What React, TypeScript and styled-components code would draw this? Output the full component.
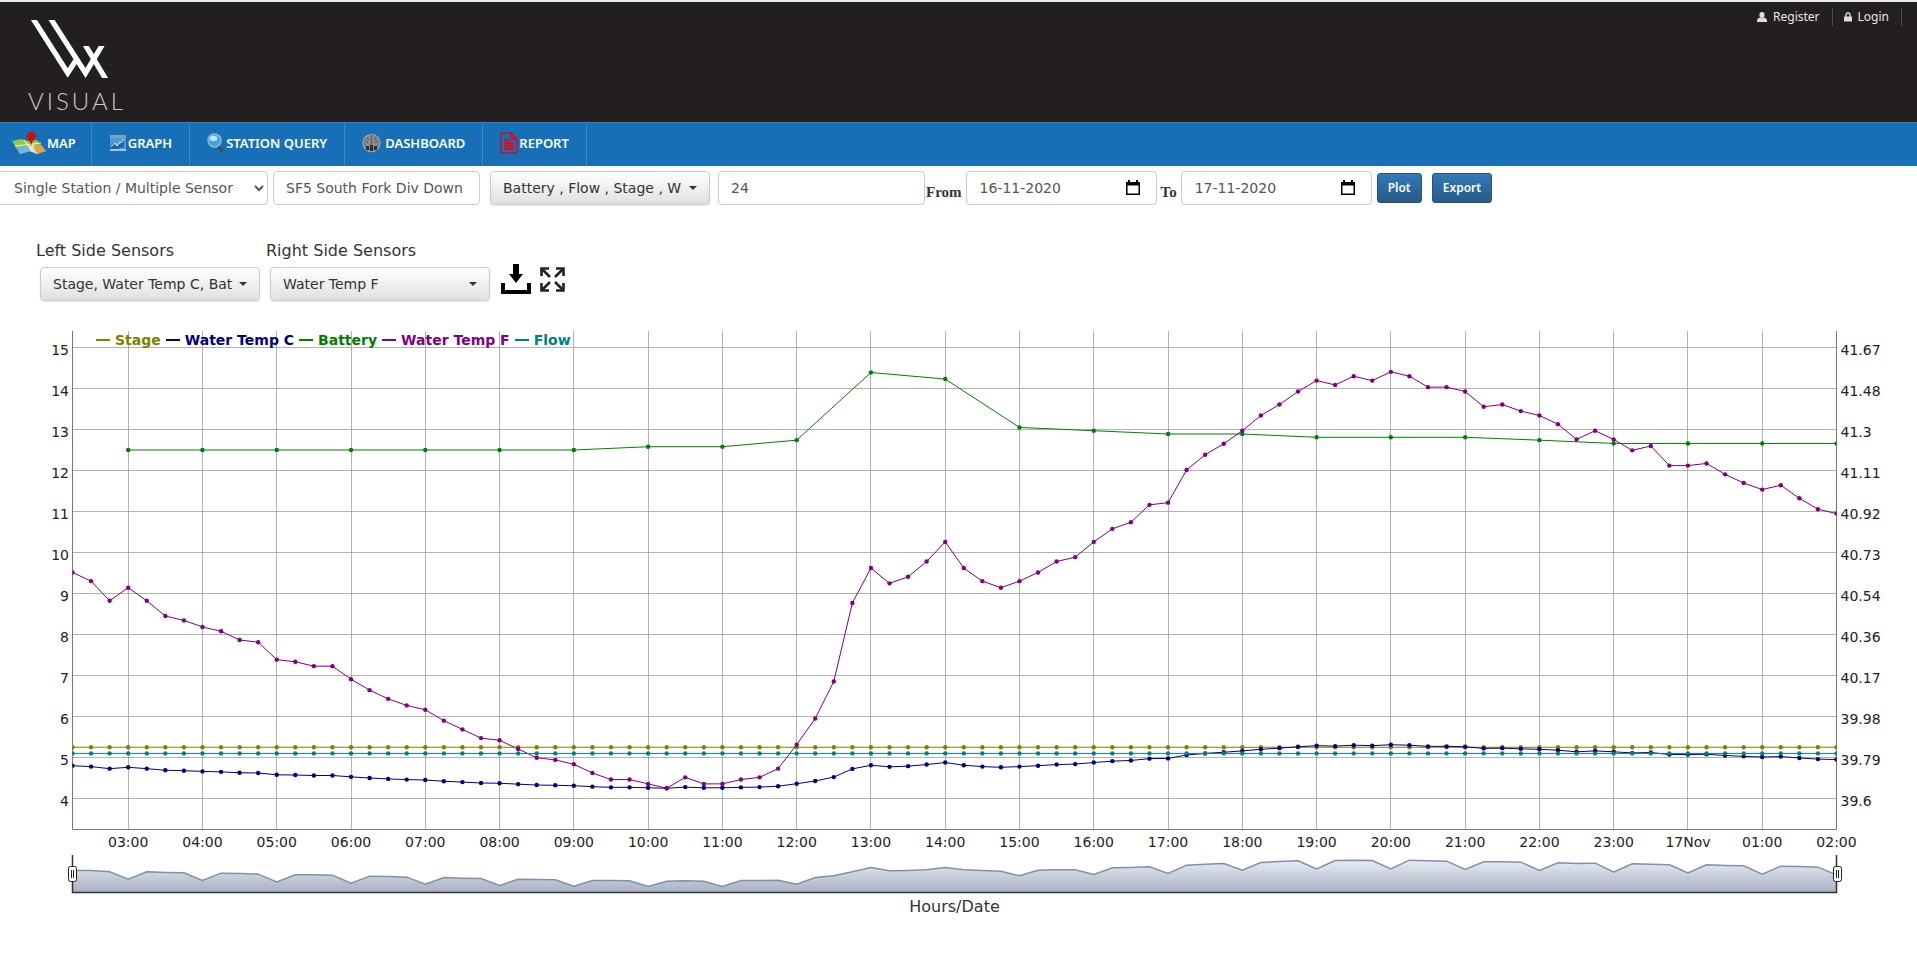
import React, { useLayoutEffect, useRef, useState } from "react";
import styled, { createGlobalStyle, css } from "styled-components";

const SANS = `"DejaVu Sans", Verdana, sans-serif`;
const UI = `"Noto Sans", "Open Sans", sans-serif`;

const GlobalStyle = createGlobalStyle`
  * { box-sizing: border-box; }
  body { margin: 0; background: #fff; color: #333; font-family: ${SANS}; font-size: 14px; }
`;

/* ---------- header ---------- */

const Header = styled.header`
  display: flex;
  justify-content: space-between;
  align-items: flex-start;
  height: 122px;
  padding: 6px 15px 0 28px;
  background: #231f20;
  border-top: 2px solid #e8eaec;
`;

const Brand = styled.a`
  display: flex;
  flex-direction: column;
  align-items: flex-start;
  gap: 9px;
  padding-top: 8px;
  color: #c9c7c7;
  text-decoration: none;
  font: 300 24px/28px Lato, sans-serif;
  letter-spacing: 3px;
  svg { display: block; }
`;

const Account = styled.ul`
  display: flex;
  list-style: none;
  margin: 0;
  padding: 0;
`;

const AccountItem = styled.li`
  border-right: 1px solid #4b4849;
  height: 18px;
  padding: 0 12px 0 11px;
  a {
    display: flex;
    align-items: center;
    gap: 6px;
    height: 18px;
    color: #e6e6e6;
    font: 12px/18px ${UI};
    text-decoration: none;
  }
`;

/* ---------- navigation ---------- */

const Nav = styled.nav`
  display: flex;
  height: 44px;
  background: #176fb7;
  border-top: 1px solid #3a80b8;
`;

const NavLink = styled.a`
  display: flex;
  align-items: center;
  gap: 1px;
  padding: 0 17px 3px 17px;
  border-right: 1px solid #3c88c5;
  color: #fff;
  font: 600 13px/20px ${UI};
  text-decoration: none;
  white-space: nowrap;
  &:first-child { padding: 0 15px 3px 12px; }
`;

/* ---------- filter toolbar ---------- */

const Toolbar = styled.form`
  display: flex;
  align-items: center;
  padding-top: 5px;
  height: 39px;
`;

const field = css`
  height: 34px;
  border: 1px solid #ccc;
  border-radius: 4px;
  background: #fff;
  color: #555;
  font: 14px/20px ${SANS};
`;

const ModeSelect = styled.select`
  ${field}
  width: 271px;
  margin: 0 5px 0 -3px;
  padding: 0 0 0 12px;
`;

const TextField = styled.input<{ $end?: number }>`
  ${field}
  width: 207px;
  margin-right: ${(p) => p.$end ?? 0}px;
  padding: 0 12px;
`;

const DateBox = styled.span`
  ${field}
  display: flex;
  align-items: center;
  width: 191px;
  padding: 0 16px 0 13px;
  svg { flex: none; }
`;

const DateInput = styled.input`
  flex: 1;
  min-width: 0;
  padding: 0;
  border: 0;
  outline: 0;
  background: none;
  color: inherit;
  font: inherit;
`;

const DateLabel = styled.label<{ $gap?: number }>`
  margin: 8px 4px 0 ${(p) => p.$gap ?? 1}px;
  font: bold 15px/20px "Liberation Serif", "Times New Roman", serif;
`;

const DropButton = styled.button<{ $end?: number }>`
  display: flex;
  align-items: center;
  justify-content: space-between;
  gap: 4px;
  width: 220px;
  height: 34px;
  margin-right: ${(p) => p.$end ?? 0}px;
  padding: 0 12px;
  border: 1px solid #ccc;
  border-radius: 4px;
  background: linear-gradient(#fff, #e0e0e0);
  box-shadow: 0 1px 2px rgba(0, 0, 0, 0.1);
  color: #333;
  font: 14px/20px ${SANS};
  white-space: nowrap;
  &::after {
    content: "";
    border: 4px solid transparent;
    border-top-color: #333;
    border-bottom: 0;
  }
`;

const ActionButton = styled.button`
  height: 30px;
  margin-left: 5px;
  padding: 0 10px;
  border: 1px solid #245580;
  border-radius: 3px;
  background: linear-gradient(#337ab7, #265a88);
  color: #fff;
  font: 600 12px/18px ${UI};
  & + & { margin-left: 10px; }
`;

/* ---------- sensor pickers ---------- */

const Sensors = styled.section`
  display: flex;
  align-items: flex-end;
  padding: 36px 0 0 40px;
`;

const Picker = styled.div`
  display: flex;
  flex-direction: column;
  gap: 6px;
  margin-right: 10px;
`;

const PickerLabel = styled.label`
  margin-left: -4px;
  font-size: 16px;
  line-height: 20px;
`;

const IconButton = styled.button`
  display: flex;
  align-items: center;
  height: 30px;
  margin: 0 8px 7px 1px;
  padding: 0;
  border: 0;
  background: none;
`;

/* ---------- chart ---------- */

const Chart = styled.figure`
  position: relative;
  margin: 30px 0 0;
`;

const Plot = styled.svg`
  display: block;
  width: 100%;
  height: 564px;
  text { font: 14px ${SANS}; fill: #222; }
`;

const Legend = styled.ul`
  position: absolute;
  top: 0;
  left: 96px;
  display: flex;
  gap: 5px;
  margin: 0;
  padding: 0;
  list-style: none;
`;

const LegendItem = styled.li<{ $color: string }>`
  display: flex;
  align-items: center;
  gap: 5px;
  color: ${(p) => p.$color};
  font: bold 14px/18px ${SANS};
  &::before {
    content: "";
    width: 14px;
    height: 2px;
    background: currentColor;
  }
`;

const Caption = styled.figcaption`
  padding: 2px 48px 0 40px;
  font-size: 16px;
  line-height: 20px;
  text-align: center;
`;

/* Water temperature every 15 minutes, in hundredths of a degree F above 39.65 */
const TEMP = [
  99, 95, 86, 92, 86, 79, 77, 74, 72, 68, 67, 59, 58, 56, 56, 50, 45, 41, 38, 36, 31, 27, 23, 22,
  18, 14, 13, 11, 7, 4, 4, 2, 0, 5, 2, 2, 4, 5, 9, 20, 32, 49, 85, 101, 94, 97, 104, 113,
  101, 95, 92, 95, 99, 104, 106, 113, 119, 122, 130, 131, 146, 153, 158, 164, 171, 176, 182, 187,
  185, 189, 187, 191, 189, 184, 184, 182, 175, 176, 173, 171, 167, 160, 164, 160, 155, 157, 148, 148,
  149, 144, 140, 137, 139, 133, 128, 126,
];
const BATTERY = [
  12.5, 12.5, 12.5, 12.5, 12.5, 12.5, 12.5, 12.58, 12.58, 12.74, 14.39, 14.23, 13.05, 12.97, 12.89,
  12.89, 12.81, 12.81, 12.81, 12.74, 12.66, 12.66, 12.66, 12.66,
];
/* Heights of the overview area, in thirds of a pixel */
const OVERVIEW = [
  66, 66, 62, 40, 62, 60, 59, 36, 58, 57, 55, 32, 53, 53, 52, 28, 49, 48, 46, 25, 45, 43, 42, 21,
  40, 39, 38, 19, 36, 36, 35, 18, 34, 35, 34, 18, 36, 36, 37, 25, 45, 50, 62, 75, 65, 66, 68, 75,
  68, 66, 64, 50, 67, 68, 68, 54, 74, 75, 77, 57, 82, 85, 87, 67, 90, 93, 95, 71, 96, 97, 96, 71,
  97, 95, 94, 69, 92, 92, 91, 66, 89, 87, 88, 62, 86, 85, 83, 59, 83, 81, 80, 55, 79, 78, 76, 53,
];
const RIGHT = ["39.6", "39.79", "39.98", "40.17", "40.36", "40.54", "40.73", "40.92", "41.11", "41.3", "41.48", "41.67"];

const SERIES = [
  { name: "Stage", color: "#808000" },
  { name: "Water Temp C", color: "#000080" },
  { name: "Battery", color: "#008000" },
  { name: "Water Temp F", color: "#800080" },
  { name: "Flow", color: "#008080" },
];

type Point = [number, number];

const Line = ({ points, color }: { points: Point[]; color: string }) => (
  <g fill={color}>
    <polyline points={points.map((p) => p.join(",")).join(" ")} fill="none" stroke={color} />
    {points.map(([x, y]) => (
      <circle key={x} cx={x} cy={y} r="2.2" />
    ))}
  </g>
);

const Handle = ({ x }: { x: number }) => (
  <g stroke="#222" fill="#fff">
    <rect x={x - 4} y="535.5" width="8" height="15" rx="2" />
    <path d={`M${x - 1} 539v8M${x + 1} 539v8`} />
  </g>
);

function SensorChart() {
  const ref = useRef<SVGSVGElement>(null);
  const [width, setWidth] = useState(0);

  useLayoutEffect(() => {
    const el = ref.current!;
    const measure = () => setWidth(el.getBoundingClientRect().width);
    measure();
    const ro = new ResizeObserver(measure);
    ro.observe(el);
    return () => ro.disconnect();
  }, []);

  const left = 72.5;
  const right = Math.max(width - 80.5, left + 100);
  const x = (i: number) => left + (i * (right - left)) / 95;
  const y = (v: number) => 467.5 - (v - 4) * 41;
  const snap = (v: number) => Math.floor(v) + 0.5;

  const tempF: Point[] = TEMP.map((n, i) => [x(i), y(4.25) - n * 2.18]);
  const tempC: Point[] = TEMP.map((n, i) => [x(i), y((39.65 + n / 100 - 32) / 1.8)]);
  const battery: Point[] = BATTERY.map((v, i) => [x(3 + i * 4), y(v)]);
  const flat = (v: number): Point[] => TEMP.map((_, i) => [x(i), y(v)]);
  const area = OVERVIEW.map((h, i) => `${x(i)},${561.5 - h / 3}`).join(" ");

  return (
    <Chart>
      <Plot ref={ref} role="img" aria-label="Sensor readings by hour">
        <defs>
          <linearGradient id="overview" x1="0" y1="0" x2="0" y2="1">
            <stop offset="0" stopColor="#e9ecf2" />
            <stop offset="1" stopColor="#a7b1c4" />
          </linearGradient>
          <clipPath id="plotArea">
            <rect x={left} y="0" width={right - left} height="499" />
          </clipPath>
        </defs>
        <g stroke="#808080" strokeOpacity="0.6">
          {RIGHT.map((_, i) => (
            <path key={i} d={`M${left} ${y(4 + i)}H${right}`} />
          ))}
          {BATTERY.map((_, i) => (
            <path key={i} d={`M${snap(x(3 + i * 4))} 0V498`} />
          ))}
        </g>
        <path d={`M${left} 0V498.5H${right}V0`} fill="none" stroke="#777" />
        {RIGHT.map((t, i) => (
          <g key={t}>
            <text x="69" y={y(4 + i) + 7} textAnchor="end">{4 + i}</text>
            <text x={right + 4} y={y(4 + i) + 7}>{t}</text>
          </g>
        ))}
        {BATTERY.map((_, i) => (
          <text key={i} x={x(3 + i * 4)} y="516" textAnchor="middle">
            {i === 21 ? "17Nov" : `${String((i + 3) % 24).padStart(2, "0")}:00`}
          </text>
        ))}
        <g clipPath="url(#plotArea)">
          <Line points={flat(5.25)} color="#808000" />
          <Line points={tempC} color="#000080" />
          <Line points={battery} color="#008000" />
          <Line points={tempF} color="#800080" />
          <Line points={flat(5.1)} color="#008080" />
        </g>
        <polygon points={`${left},561 ${area} ${right},561`} fill="url(#overview)" />
        <polyline points={area} fill="none" stroke="#808fab" strokeWidth="1.5" />
        <path d={`M${left} 524V561.5H${right}V524`} fill="none" stroke="#333" strokeWidth="1.5" />
        <Handle x={left} />
        <Handle x={right + 1} />
      </Plot>
      <Legend>
        {SERIES.map((s) => (
          <LegendItem key={s.name} $color={s.color}>{s.name}</LegendItem>
        ))}
      </Legend>
      <Caption>Hours/Date</Caption>
    </Chart>
  );
}

/* ---------- icons ---------- */

const Logo = () => (
  <svg width="84" height="62" viewBox="0 0 84 62" fill="none" stroke="#fff" strokeWidth="5.200">
    <clipPath id="logoTrim">
      <path d="M0 4H50V30H84V62H0Z" />
    </clipPath>
    <g clipPath="url(#logoTrim)">
      <path d="M3.400 0L39.700 57L49.500 42" />
      <path d="M21 0L57.500 57L76 26" />
      <path d="M55.500 26L79.500 66" />
    </g>
  </svg>
);

const UserIcon = () => (
  <svg width="10" height="10" viewBox="0 0 10 10" fill="#ddd">
    <ellipse cx="5" cy="3" rx="2.600" ry="3" />
    <path d="M0 10V8Q.500 6 2.800 5.500Q5 7 7.200 5.500Q9.500 6 10 8V10Z" />
  </svg>
);

const LockIcon = () => (
  <svg width="8" height="10" viewBox="0 0 8 10">
    <path d="M2 5V3a2 2 0 0 1 4 0V5" fill="none" stroke="#ddd" strokeWidth="1.400" />
    <rect y="4.500" width="8" height="5" rx="0.500" fill="#ddd" />
  </svg>
);

const MapIcon = () => (
  <svg width="34" height="22" viewBox="0 0 34 22">
    <path d="M0 9L9 7L16 9L25 8L34 19L25 22L18 19L8 22Z" fill="#8cc84b" />
    <path d="M5 16.500L14 13L19 19L8 22Z" fill="#6fb7e2" />
    <path d="M16 14L22 12L28 21L25 22L18 19Z" fill="#d6e6c8" />
    <path d="M21 14L29 13L34 19L25 22Z" fill="#e2a24a" />
    <path d="M3 14L29 11M12 8L21 20" fill="none" stroke="#f7efb0" strokeWidth="1.200" />
    <path d="M19 14Q18.500 9 15.500 7A4.600 4.600 0 1 1 23 7Q20 9 19 14Z" fill="#d00c0c" />
  </svg>
);

const GraphIcon = () => (
  <svg width="18" height="18" viewBox="0 0 18 18">
    <rect x="1" y="1" width="16" height="16" fill="#4d9ad6" />
    <path d="M1 1H17V4H1Z" fill="#7ba3bd" />
    <path d="M1 12L5 9L8 12L15 5V13L9 15L1 16Z" fill="#1f66a8" />
    <path d="M2 13L6 9L8 12L11 8L12 9L15 5" fill="none" stroke="#e8f4ff" />
    <path d="M1 15H17V17H1Z" fill="#a3c8e4" />
  </svg>
);

const SearchIcon = () => (
  <svg width="18" height="20" viewBox="0 0 18 20">
    <path d="M10 12L15.500 18.500" stroke="#4a4a4a" strokeWidth="3" />
    <circle cx="7.500" cy="7.500" r="6.500" fill="#3ea4e4" stroke="#8fb8d4" strokeWidth="1.500" />
    <ellipse cx="6.500" cy="5.500" rx="3.800" ry="2.800" fill="#bfe6fb" />
  </svg>
);

const GaugeIcon = () => (
  <svg width="22" height="20" viewBox="0 0 22 20">
    <circle cx="9.500" cy="10" r="8.500" fill="#6f7478" stroke="#9aa3aa" strokeWidth="1.400" />
    <circle cx="9.500" cy="9.500" r="6.500" fill="#8d9194" />
    <path d="M9.500 1.500V10M4 8L6 10M15 8L13 10M5 5L7 7M14 5L12 7" stroke="#55595c" strokeWidth="1.200" />
    <path d="M4 17V13H7V17ZM8 18V12H11V18ZM12 17V13H15V17Z" fill="#2c2e30" />
    <circle cx="9.500" cy="10.500" r="1.200" fill="#a55" />
  </svg>
);

const ReportIcon = () => (
  <svg width="18" height="22" viewBox="0 0 18 22" fill="none" stroke="#c4122f" strokeWidth="1.500">
    <path d="M4 7H10V10H14V18H4Z" fill="#a3304f" stroke="none" />
    <path d="M1 1H11L17 7V21H1Z" />
    <path d="M11 1V7H17Z" fill="#f01020" />
    <path d="M4 8H9M4 11H14M4 14H14M4 17H14" />
  </svg>
);

const CalendarIcon = () => (
  <svg width="14" height="16" viewBox="0 0 14 16">
    <path d="M0 2H14V15H0ZM1.500 5.500V13.500H12.500V5.500Z" fill="#000" fillRule="evenodd" />
    <path d="M2 0H4V2H2ZM10 0H12V2H10Z" fill="#000" />
  </svg>
);

const DownloadIcon = () => (
  <svg width="30" height="30" viewBox="0 0 30 30">
    <path d="M12 0H18V10H22L15 19L8 10H12Z" />
    <path d="M2 19V28H28V19" fill="none" stroke="#000" strokeWidth="4" />
  </svg>
);

const ExpandIcon = () => (
  <svg width="25" height="25" viewBox="0 0 25 25" fill="none" stroke="#222" strokeWidth="2.600">
    <path d="M1.500 9V1.500H9M16 1.500H23.500V9M23.500 16V23.500H16M9 23.500H1.500V16" />
    <path d="M2 2L10 10M23 2L15 10M23 23L15 15M2 23L10 15" />
  </svg>
);

const LINKS = [
  { label: "MAP", icon: <MapIcon /> },
  { label: "GRAPH", icon: <GraphIcon /> },
  { label: "STATION QUERY", icon: <SearchIcon /> },
  { label: "DASHBOARD", icon: <GaugeIcon /> },
  { label: "REPORT", icon: <ReportIcon /> },
];

export default function App() {
  return (
    <>
      <GlobalStyle />
      <Header>
        <Brand href="#home">
          <Logo />
          VISUAL
        </Brand>
        <Account>
          <AccountItem><a href="#register"><UserIcon />Register</a></AccountItem>
          <AccountItem><a href="#login"><LockIcon />Login</a></AccountItem>
        </Account>
      </Header>
      <Nav>
        {LINKS.map((l) => (
          <NavLink key={l.label} href="#">{l.icon}{l.label}</NavLink>
        ))}
      </Nav>
      <main>
        <Toolbar onSubmit={(e) => e.preventDefault()}>
          <ModeSelect aria-label="Plot mode">
            <option>Single Station / Multiple Sensor</option>
          </ModeSelect>
          <TextField aria-label="Station" defaultValue="SF5 South Fork Div Down" $end={10} />
          <DropButton type="button" $end={8}>Battery , Flow , Stage , W</DropButton>
          <TextField aria-label="Hours" defaultValue="24" />
          <DateLabel htmlFor="from">From</DateLabel>
          <DateBox><DateInput id="from" defaultValue="16-11-2020" /><CalendarIcon /></DateBox>
          <DateLabel htmlFor="to" $gap={4}>To</DateLabel>
          <DateBox><DateInput id="to" defaultValue="17-11-2020" /><CalendarIcon /></DateBox>
          <ActionButton>Plot</ActionButton>
          <ActionButton type="button">Export</ActionButton>
        </Toolbar>
        <Sensors>
          <Picker>
            <PickerLabel htmlFor="left-sensors">Left Side Sensors</PickerLabel>
            <DropButton id="left-sensors">Stage, Water Temp C, Bat</DropButton>
          </Picker>
          <Picker>
            <PickerLabel htmlFor="right-sensors">Right Side Sensors</PickerLabel>
            <DropButton id="right-sensors">Water Temp F</DropButton>
          </Picker>
          <IconButton aria-label="Download"><DownloadIcon /></IconButton>
          <IconButton aria-label="Full screen"><ExpandIcon /></IconButton>
        </Sensors>
        <SensorChart />
      </main>
    </>
  );
}
